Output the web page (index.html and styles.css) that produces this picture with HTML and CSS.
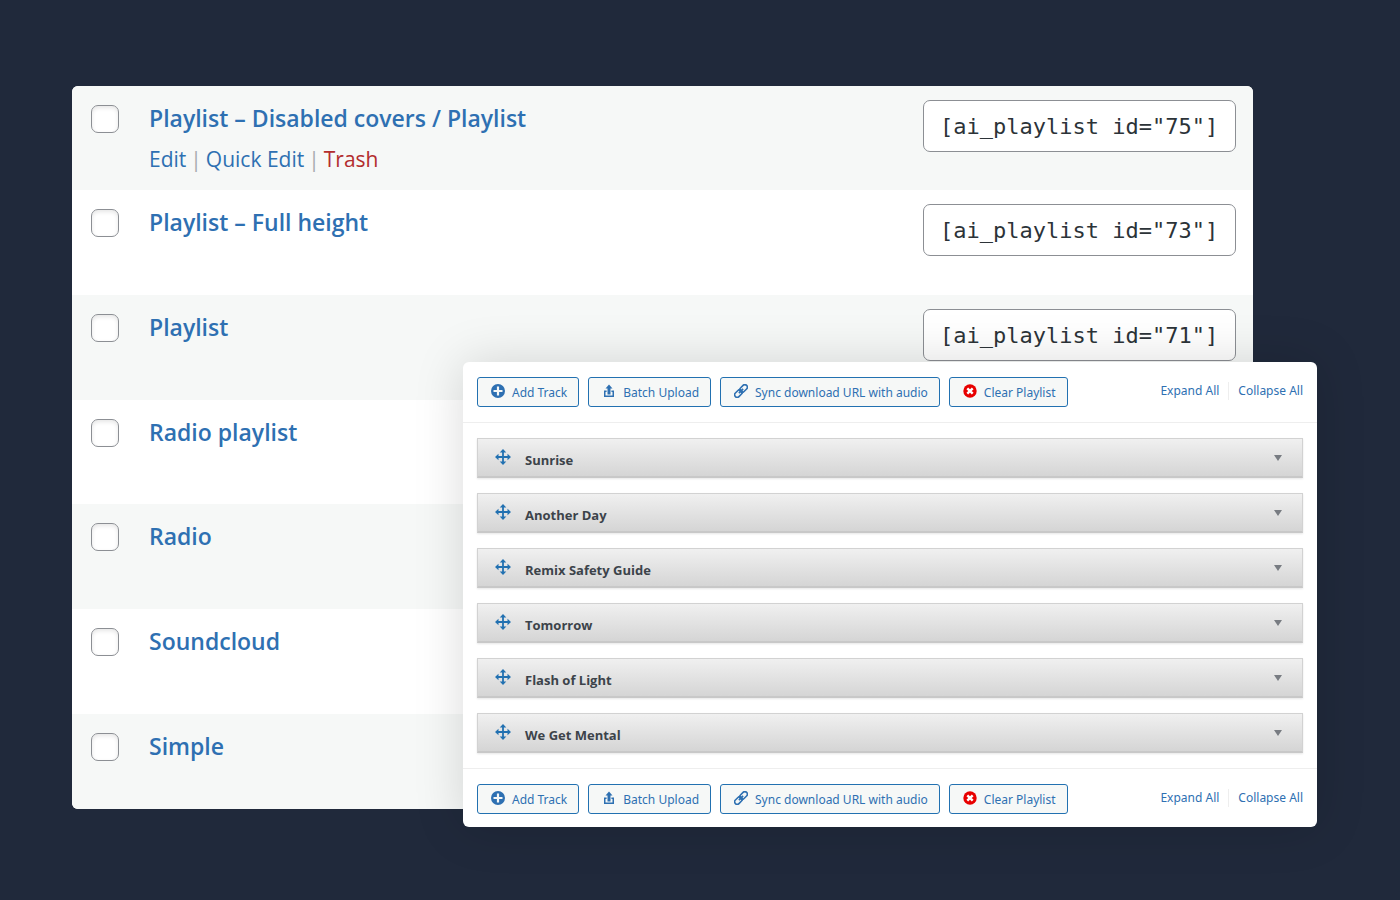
FILE: index.html
```html
<!DOCTYPE html>
<html lang="en">
<head>
    <meta charset="UTF-8">
    <meta name="viewport" content="width=device-width, initial-scale=1.0">
    <title>Playlists</title>
    <link rel="stylesheet" href="styles.css">
</head>
<body>
    <!-- icons used more than once -->
    <svg class="sprite" aria-hidden="true">
        <symbol id="icon-plus" viewBox="0 0 14 14">
            <path fill="currentColor" fill-rule="evenodd" d="M7 0a7 7 0 1 1 0 14A7 7 0 0 1 7 0zM5.900 2.500v3.400H2.500v2.200h3.400v3.400h2.200V8.100h3.400V5.900H8.100V2.500z"/>
        </symbol>
        <symbol id="icon-upload" viewBox="0 0 14 14">
            <path fill="currentColor" d="M7 .5l3.500 4H8.500V10.500H5.500V4.500H3.500zM2 6.500h2.600v1.500H3.500v3.500h7V8H9.400V6.500H12V13H2z"/>
        </symbol>
        <symbol id="icon-link" viewBox="0 0 14 14">
            <g fill="none" stroke="currentColor" stroke-width="1.600" transform="rotate(-45 7 7)">
                <rect x="-.9" y="4.500" width="8.600" height="5" rx="2.500"/>
                <rect x="6.300" y="4.500" width="8.600" height="5" rx="2.500"/>
                <path d="M4 7h6"/>
            </g>
        </symbol>
        <symbol id="icon-clear" viewBox="0 0 14 14">
            <circle cx="7" cy="7" r="6.700" fill="#e80000"/>
            <path d="M4.300 4.300l5.400 5.400M9.700 4.300l-5.400 5.400" stroke="#fff" stroke-width="2.400"/>
        </symbol>
        <symbol id="icon-move" viewBox="0 0 16 16">
            <path fill="currentColor" d="M8 0l3.300 3.500H8.900v3.600h3.600V4.700L16 8l-3.500 3.300V8.900H8.900v3.600h2.400L8 16l-3.300-3.500h2.400V8.900H3.500v2.400L0 8l3.500-3.300v2.400h3.600V3.500H4.700z"/>
        </symbol>
    </svg>

    <main class="page">
        <table class="playlists">
            <tbody>
                <tr>
                    <td class="check"><input type="checkbox" aria-label="Playlist – Disabled covers / Playlist"></td>
                    <td class="title">
                        <a class="name" href="#">Playlist – Disabled covers / Playlist</a>
                        <div class="actions"><a href="#">Edit</a><span>|</span><a href="#">Quick Edit</a><span>|</span><a class="trash" href="#">Trash</a></div>
                    </td>
                    <td class="code"><input type="text" class="shortcode" aria-label="Shortcode" value='[ai_playlist id="75"]' readonly></td>
                </tr>
                <tr>
                    <td class="check"><input type="checkbox" aria-label="Playlist – Full height"></td>
                    <td class="title"><a class="name" href="#">Playlist – Full height</a></td>
                    <td class="code"><input type="text" class="shortcode" aria-label="Shortcode" value='[ai_playlist id="73"]' readonly></td>
                </tr>
                <tr>
                    <td class="check"><input type="checkbox" aria-label="Playlist"></td>
                    <td class="title"><a class="name" href="#">Playlist</a></td>
                    <td class="code"><input type="text" class="shortcode" aria-label="Shortcode" value='[ai_playlist id="71"]' readonly></td>
                </tr>
                <tr>
                    <td class="check"><input type="checkbox" aria-label="Radio playlist"></td>
                    <td class="title"><a class="name" href="#">Radio playlist</a></td>
                    <td class="code"></td>
                </tr>
                <tr>
                    <td class="check"><input type="checkbox" aria-label="Radio"></td>
                    <td class="title"><a class="name" href="#">Radio</a></td>
                    <td class="code"></td>
                </tr>
                <tr>
                    <td class="check"><input type="checkbox" aria-label="Soundcloud"></td>
                    <td class="title"><a class="name" href="#">Soundcloud</a></td>
                    <td class="code"></td>
                </tr>
                <tr>
                    <td class="check"><input type="checkbox" aria-label="Simple"></td>
                    <td class="title"><a class="name" href="#">Simple</a></td>
                    <td class="code"></td>
                </tr>
            </tbody>
        </table>

        <section class="editor">
            <div class="toolbar">
                <button type="button" class="btn"><svg class="icon"><use href="#icon-plus"/></svg>Add Track</button>
                <button type="button" class="btn"><svg class="icon"><use href="#icon-upload"/></svg>Batch Upload</button>
                <button type="button" class="btn"><svg class="icon"><use href="#icon-link"/></svg>Sync download URL with audio</button>
                <button type="button" class="btn"><svg class="icon"><use href="#icon-clear"/></svg>Clear Playlist</button>
                <div class="toggles">
                    <a href="#">Expand All</a>
                    <a href="#">Collapse All</a>
                </div>
            </div>

            <ul class="tracks">
                <li class="track"><svg class="move"><use href="#icon-move"/></svg><span class="track-name">Sunrise</span><span class="arrow"></span></li>
                <li class="track"><svg class="move"><use href="#icon-move"/></svg><span class="track-name">Another Day</span><span class="arrow"></span></li>
                <li class="track"><svg class="move"><use href="#icon-move"/></svg><span class="track-name">Remix Safety Guide</span><span class="arrow"></span></li>
                <li class="track"><svg class="move"><use href="#icon-move"/></svg><span class="track-name">Tomorrow</span><span class="arrow"></span></li>
                <li class="track"><svg class="move"><use href="#icon-move"/></svg><span class="track-name">Flash of Light</span><span class="arrow"></span></li>
                <li class="track"><svg class="move"><use href="#icon-move"/></svg><span class="track-name">We Get Mental</span><span class="arrow"></span></li>
            </ul>

            <div class="toolbar toolbar-bottom">
                <button type="button" class="btn"><svg class="icon"><use href="#icon-plus"/></svg>Add Track</button>
                <button type="button" class="btn"><svg class="icon"><use href="#icon-upload"/></svg>Batch Upload</button>
                <button type="button" class="btn"><svg class="icon"><use href="#icon-link"/></svg>Sync download URL with audio</button>
                <button type="button" class="btn"><svg class="icon"><use href="#icon-clear"/></svg>Clear Playlist</button>
                <div class="toggles">
                    <a href="#">Expand All</a>
                    <a href="#">Collapse All</a>
                </div>
            </div>
        </section>
    </main>
</body>
</html>
```

FILE: styles.css
```css
* {
    box-sizing: border-box;
}

body {
    margin: 0;
    background-color: #20293b;
    font-family: "Open Sans", "Noto Sans", sans-serif;
    color: #3c434a;
}

a {
    color: #2e70b2;
    text-decoration: none;
}

.sprite {
    display: none;
}

.page {
    position: relative;
    min-height: 100vh;
    padding: 86px 147px 86px 72px;
}

/* playlist table */
.playlists {
    width: 100%;
    border-collapse: separate;
    border-spacing: 0;
    background-color: #fff;
    border-radius: 6px;
    overflow: hidden;
}

.playlists tr {
    height: 105px;
}

.playlists tr:nth-child(3n+1) {
    height: 104px;
}

.playlists tr:nth-child(odd) {
    background-color: #f6f8f7;
}

.playlists tr:last-child {
    height: 95px;
}

.playlists td {
    padding: 0;
    vertical-align: top;
}

.playlists .check {
    width: 77px;
    padding: 19px 0 0 19px;
}

.check input {
    appearance: none;
    display: block;
    width: 28px;
    height: 28px;
    margin: 0;
    border: 1px solid #8c8f94;
    border-radius: 7px;
    background-color: #fff;
    box-shadow: inset 0 2px 4px rgba(0, 0, 0, 0.1);
}

.playlists .title {
    padding-top: 14px;
}

.name {
    display: block;
    font-size: 23px;
    line-height: 36px;
    font-weight: 600;
}

.actions {
    display: flex;
    gap: 4px;
    margin-top: 5px;
    font-size: 21px;
    line-height: 36px;
    color: #a7aaad;
}

.actions .trash {
    color: #b32d2e;
}

.playlists .code {
    width: 330px;
    padding: 14px 17px 0 0;
}

.shortcode {
    display: block;
    width: 100%;
    height: 52px;
    padding: 0 16px;
    border: 1px solid #8c8f94;
    border-radius: 7px;
    background-color: #fff;
    color: #2c3338;
    font-family: "DejaVu Sans Mono", monospace;
    font-size: 22px;
}

/* track editor, lies over the table */
.editor {
    position: absolute;
    top: 362px;
    left: 463px;
    right: 83px;
    background-color: #fff;
    border-radius: 6px;
    box-shadow: 0 0 50px rgba(0, 0, 0, 0.15);
}

.toolbar {
    display: flex;
    align-items: center;
    gap: 9px;
    padding: 15px 14px;
    border-bottom: 1px solid #eee;
}

.toolbar-bottom {
    padding-bottom: 13px;
    border-top: 1px solid #eee;
    border-bottom: none;
}

.btn {
    display: flex;
    align-items: center;
    height: 30px;
    padding: 0 11px 0 13px;
    border: 1px solid #2271b1;
    border-radius: 3px;
    background-color: #f6f8f7;
    color: #2e70b2;
    font-family: "Noto Sans", sans-serif;
    font-size: 12px;
    white-space: nowrap;
    cursor: pointer;
}

.icon {
    width: 14px;
    height: 14px;
    margin: 0 7px 2px 0;
}

.toggles {
    display: flex;
    margin-left: auto;
    padding-bottom: 3px;
    font-family: "Noto Sans", sans-serif;
    font-size: 12px;
    line-height: 18px;
}

.toggles a + a {
    margin-left: 9px;
    padding-left: 9px;
    border-left: 1px solid #eee;
}

.tracks {
    display: flex;
    flex-direction: column;
    gap: 15px;
    margin: 0;
    padding: 15px 14px;
    list-style: none;
}

.track {
    display: flex;
    align-items: center;
    height: 40px;
    padding: 0 20px 0 17px;
    border: 1px solid #d2d2d2;
    border-bottom: 2px solid #c8c8c8;
    background: linear-gradient(#f0f0f0, #d5d5d5);
    box-shadow: 0 1px 2px rgba(0, 0, 0, 0.1);
}

.move {
    width: 16px;
    height: 16px;
    margin: 0 14px 2px 0;
    color: #2271b1;
}

.track-name {
    flex: 1;
    padding-top: 4px;
    font-size: 13px;
    line-height: 18px;
    font-weight: 700;
}

.arrow {
    border: 4px solid transparent;
    border-top: 6px solid #787c82;
    border-bottom: none;
}
```
